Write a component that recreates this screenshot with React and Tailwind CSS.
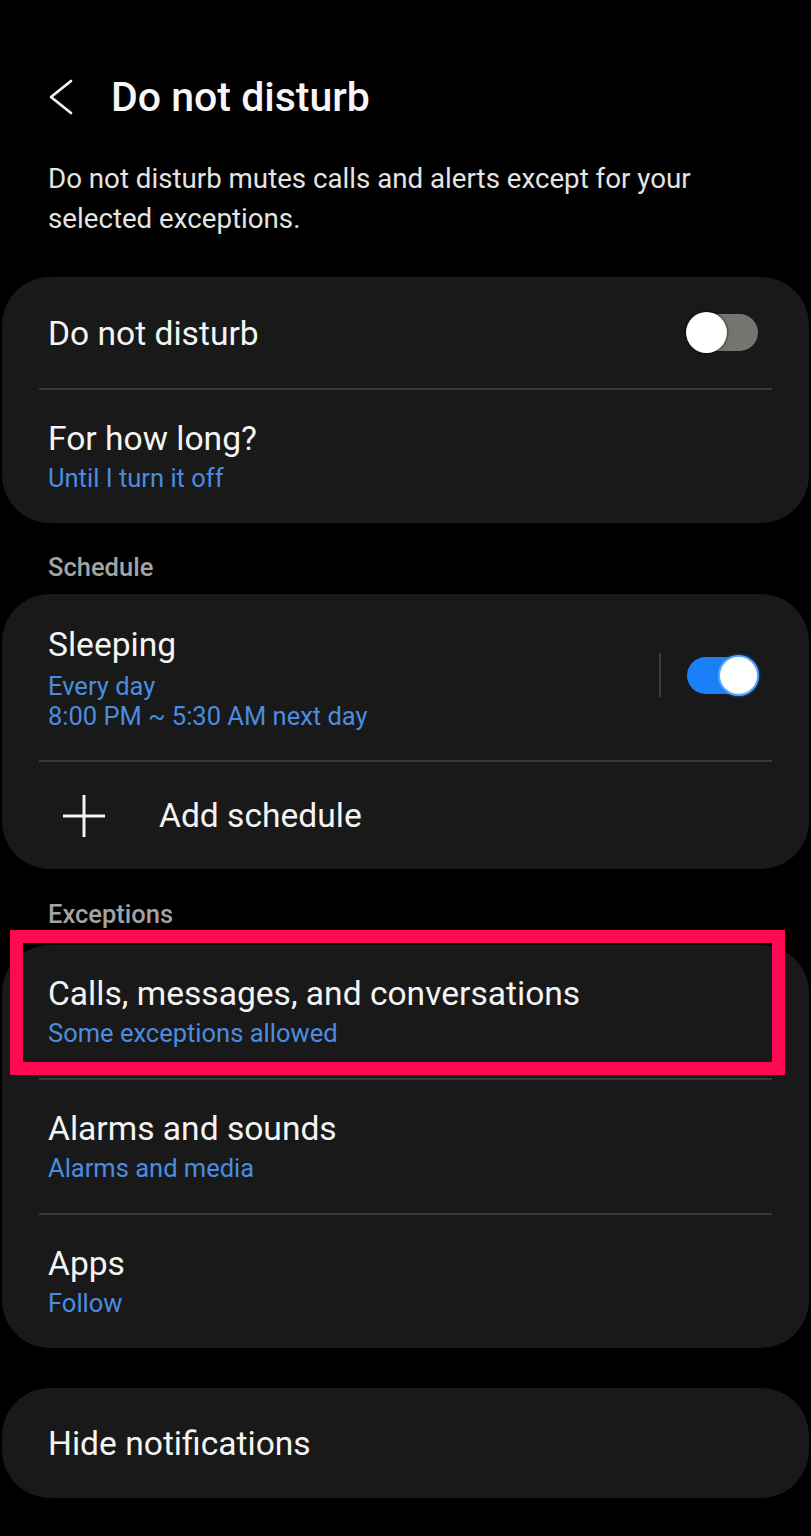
const font = { fontFamily: 'Roboto, "Noto Sans", sans-serif' }

function Toggle({ on }) {
  return (
    <div className={`relative w-[71px] h-[37px] rounded-full shrink-0 ${on ? 'bg-[#1a80f5]' : 'bg-[#75756f]'}`}>
      <div
        className={`absolute top-[-2px] w-[41px] h-[41px] rounded-full bg-white ${
          on
            ? 'right-[-1px] border-2 border-[#5aa6ff] shadow-[0_0_3px_rgba(26,128,245,0.9)]'
            : 'left-[-1px] shadow-[0_0_3px_rgba(0,0,0,0.9)]'
        }`}
      />
    </div>
  )
}

function Divider() {
  return <div className="mx-[37px] h-[2px] bg-[#393939]" />
}

function Card({ children, className = '' }) {
  return <div className={`mx-[2px] rounded-[48px] bg-[#191919] ${className}`}>{children}</div>
}

function SectionLabel({ children, className = '' }) {
  return (
    <div className={`px-[48px] text-[25.5px] leading-[34px] font-medium text-[#a3a3a3] ${className}`}>
      {children}
    </div>
  )
}

/* two-line row: title with a blue summary under it */
function Row({ title, sub }) {
  return (
    <div className="pl-[46px] pr-[46px] pt-[29px] pb-[26px]">
      <div className="text-[33.6px] leading-[40px] text-[#f4f4f4]">{title}</div>
      <div className="text-[25.5px] leading-[38px] text-[#4a8de0]">{sub}</div>
    </div>
  )
}

export default function App() {
  return (
    <div className="min-h-[1536px] w-full bg-black pt-[67px] pb-[38px]" style={font}>
      {/* Header */}
      <header className="flex items-center h-[60px]">
        <svg className="ml-[48px] w-[26px] h-[36px]" viewBox="0 0 26 36" fill="none" stroke="#f2f2f2" strokeWidth={2.8} strokeLinecap="round" strokeLinejoin="round">
          <polyline points="23,2 3,18 23,34" />
        </svg>
        <h1 className="ml-[37px] text-[41px] leading-[60px] font-medium text-[#f6f6f6]">Do not disturb</h1>
      </header>

      <p className="mt-[32px] px-[48px] text-[27.7px] leading-[40px] text-[#e4e4e4]">
        Do not disturb mutes calls and alerts except for your selected exceptions.
      </p>

      {/* Main switch */}
      <Card className="mt-[38px]">
        <div className="flex items-center h-[111px] pl-[46px] pr-[51px]">
          <div className="flex-1 pt-[3px] text-[33.6px] text-[#f4f4f4]">Do not disturb</div>
          <Toggle on={false} />
        </div>
        <Divider />
        <Row title="For how long?" sub="Until I turn it off" />
      </Card>

      <SectionLabel className="mt-[27px]">Schedule</SectionLabel>

      <Card className="mt-[10px]">
        <div className="flex items-center pl-[46px] pr-[51px] pt-[31px] pb-[29px]">
          <div className="flex-1">
            <div className="text-[33.6px] leading-[40px] text-[#f4f4f4]">Sleeping</div>
            <div className="mt-[6px] text-[25.5px] leading-[30px] text-[#4a8de0]">Every day</div>
            <div className="text-[25.5px] leading-[30px] text-[#4a8de0]">8:00 PM ~ 5:30 AM next day</div>
          </div>
          <div className="w-[2px] h-[44px] bg-[#3c3c3c] mr-[26px] -mt-[6px]" />
          <div className="-mt-[6px]">
            <Toggle on />
          </div>
        </div>
        <Divider />
        <div className="flex items-center h-[107px] pl-[60px]">
          <svg className="w-[44px] h-[44px]" viewBox="0 0 44 44" fill="none" stroke="#f2f2f2" strokeWidth={3}>
            <line x1="22" y1="1" x2="22" y2="43" />
            <line x1="1" y1="22" x2="43" y2="22" />
          </svg>
          <span className="ml-[53px] pt-[2px] text-[33.6px] text-[#f4f4f4]">Add schedule</span>
        </div>
      </Card>

      <SectionLabel className="mt-[28px]">Exceptions</SectionLabel>

      <div className="relative mt-[14px]">
        <Card>
          <Row title="Calls, messages, and conversations" sub="Some exceptions allowed" />
          <Divider />
          <Row title="Alarms and sounds" sub="Alarms and media" />
          <Divider />
          <Row title="Apps" sub="Follow" />
        </Card>
        {/* highlight frame around the first exception row */}
        <div className="absolute left-[10px] top-[-15px] w-[775px] h-[145px] border-[13px] border-[#ff0a52] pointer-events-none" />
      </div>

      <Card className="mt-[40px]">
        <div className="flex items-center h-[110px] pl-[46px] pt-[3px] text-[33.6px] text-[#f4f4f4]">Hide notifications</div>
      </Card>
    </div>
  )
}
